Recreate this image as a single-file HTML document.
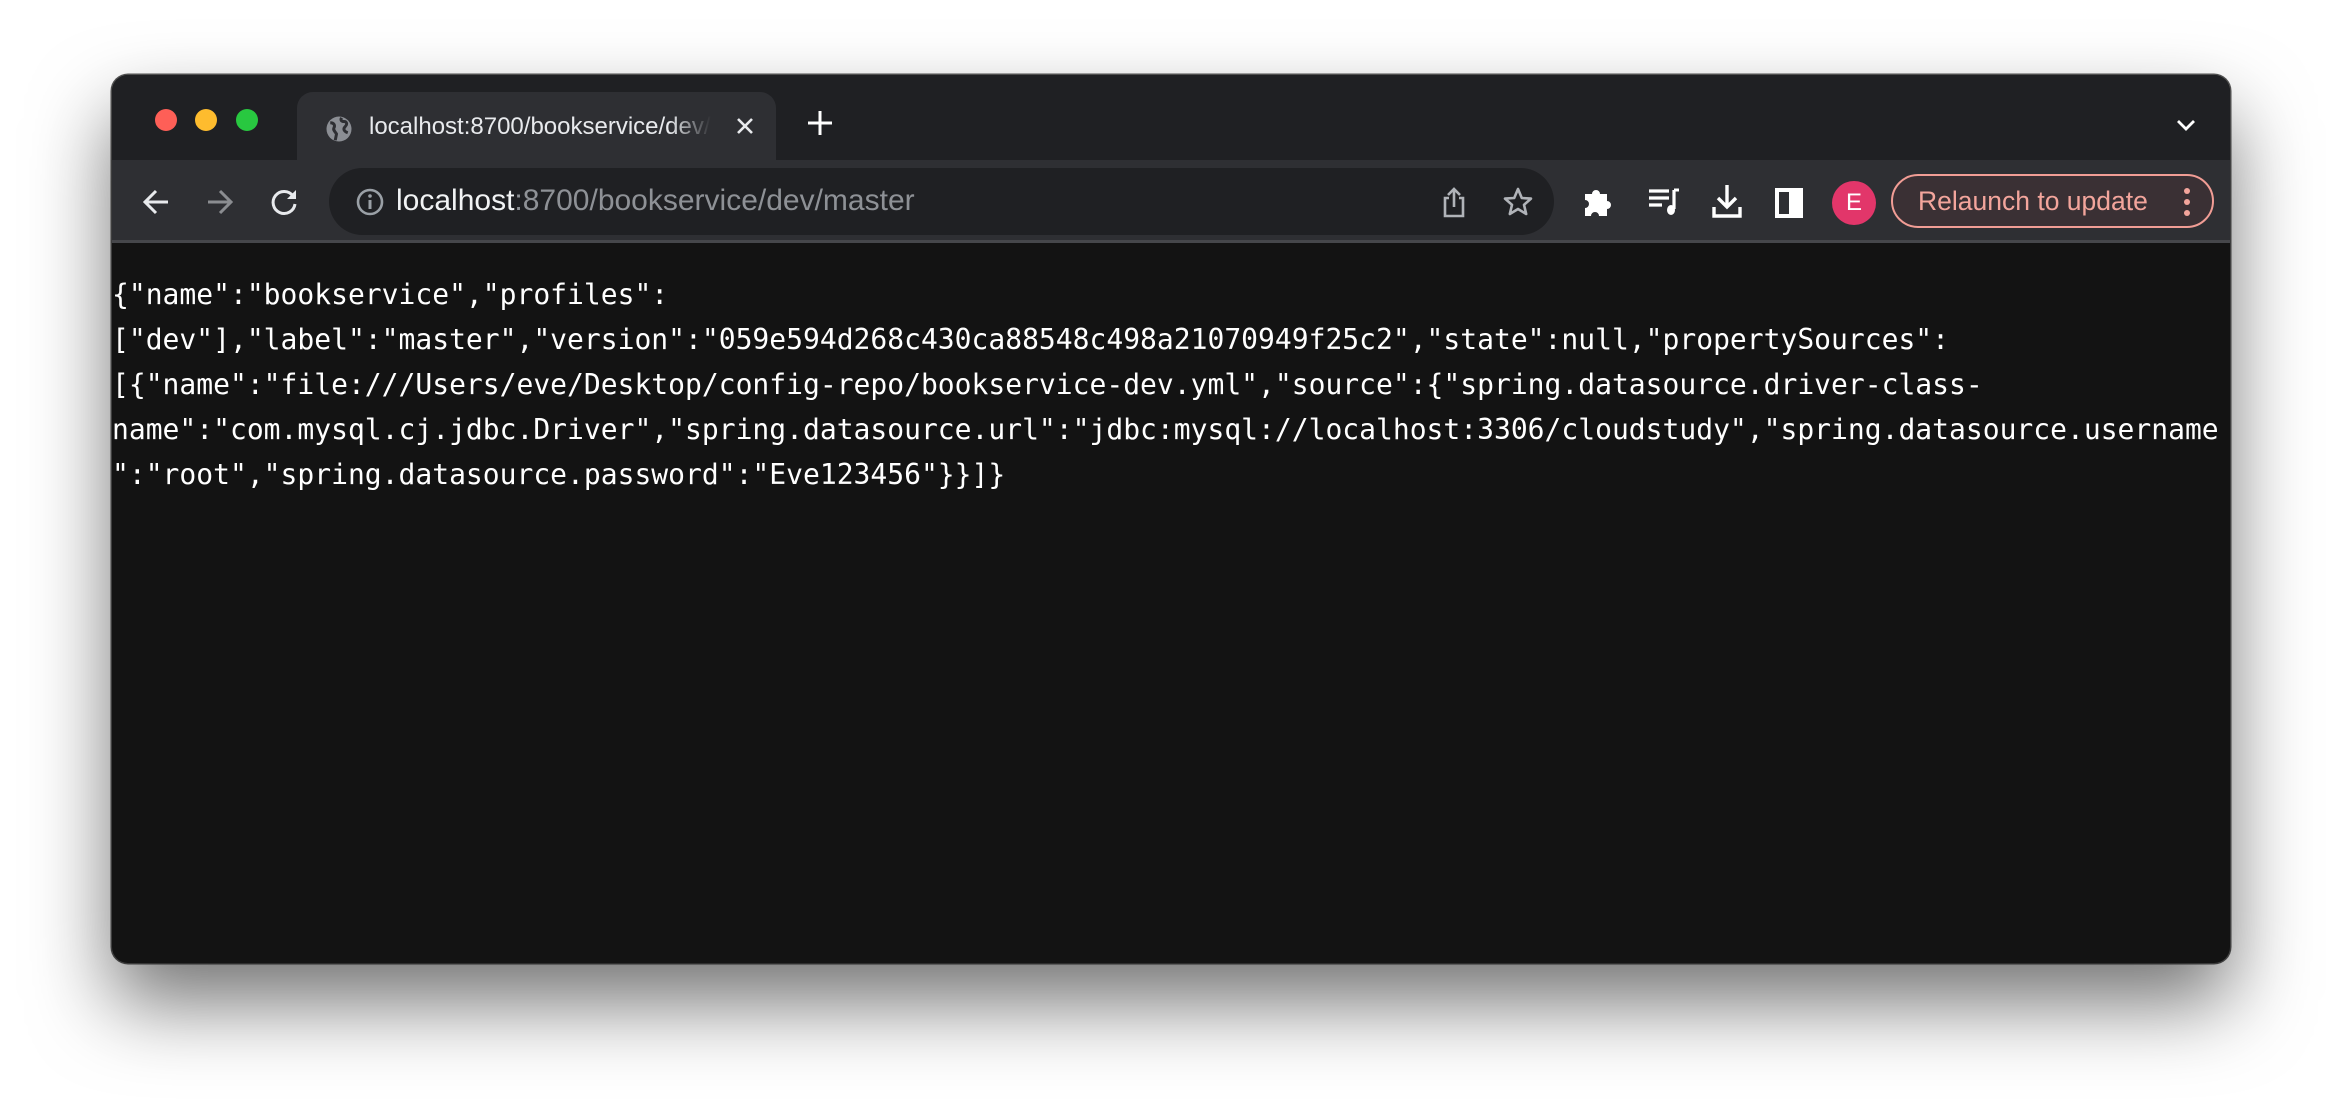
<!DOCTYPE html>
<html><head><meta charset="utf-8">
<style>
*{margin:0;padding:0;box-sizing:border-box}
html,body{width:2342px;height:1112px;background:#fff;overflow:hidden;font-family:"Liberation Sans",sans-serif}
.win{position:absolute;left:112px;top:75px;width:2118px;height:888px;border-radius:16px;background:#131313;overflow:hidden;box-shadow:0 40px 80px rgba(0,0,0,.55),0 0 0 1.5px #555;}
.strip{position:absolute;left:0;top:0;width:100%;height:85px;background:#1f2023}
.dot{position:absolute;top:34px;width:22px;height:22px;border-radius:50%}
.tab{position:absolute;left:185px;top:17px;width:479px;height:80px;background:#2e2f33;border-radius:16px 16px 0 0}
.tabtxt{position:absolute;left:72px;top:21px;font-size:24px;color:#e8eaed;white-space:nowrap;width:342px;overflow:hidden;-webkit-mask-image:linear-gradient(90deg,#000 88%,transparent)}
.tool{position:absolute;left:0;top:85px;width:100%;height:83px;background:#2e2f33;border-bottom:3px solid #46474b}
.omni{position:absolute;left:217px;top:8px;width:1225px;height:67px;background:#1f2023;border-radius:34px}
.url{position:absolute;left:67px;top:16px;font-size:30px;color:#8e9196;white-space:nowrap}
.url b{font-weight:normal;color:#f1f3f4}
.ic{position:absolute}
.relaunch{position:absolute;left:1779px;top:14px;width:323px;height:54px;border:2px solid #f19d95;border-radius:28px;background:#3a3034;color:#f3a59c;font-size:26.5px;line-height:50px;padding-left:25px}
.content{position:absolute;left:0;top:171px;width:2200px;font-family:"DejaVu Sans Mono",monospace;font-size:28.4px;line-height:45px;color:#fff;white-space:pre;padding-top:26px;transform:scaleX(0.986);transform-origin:0 0}
</style></head><body>
<div class="win">
 <div class="strip">
  <div class="dot" style="left:43px;background:#fe5f57"></div>
  <div class="dot" style="left:83px;background:#febc2e"></div>
  <div class="dot" style="left:124px;background:#28c840"></div>
  <div class="tab">
   <svg class="ic" style="left:27px;top:22px" width="30" height="30" viewBox="0 0 24 24"><circle cx="12" cy="12" r="10" fill="#8b8e94"/><path d="M5 7c3 0 4 2 3 4s1 3 2 5l-1 5M14 3c-1 2 0 3 2 3s3 2 1 4-1 4 2 5" stroke="#2e2f33" stroke-width="2.4" fill="none"/></svg>
   <div class="tabtxt">localhost:8700/bookservice/dev/master</div>
   <svg class="ic" style="left:439px;top:25px" width="18" height="18" viewBox="0 0 18 18"><path d="M2 2L16 16M16 2L2 16" stroke="#e8eaed" stroke-width="2.6"/></svg>
  </div>
  <svg class="ic" style="left:695px;top:35px" width="26" height="26" viewBox="0 0 26 26"><path d="M13 1V25M1 13H25" stroke="#fff" stroke-width="3"/></svg>
  <svg class="ic" style="left:2064px;top:44px" width="20" height="13" viewBox="0 0 20 13"><path d="M2 2L10 10L18 2" stroke="#fff" stroke-width="2.8" fill="none"/></svg>
 </div>
 <div class="tool">
  <svg class="ic" style="left:29px;top:27px" width="30" height="30" viewBox="0 0 30 30"><path d="M27 15H4M15 4L4 15L15 26" stroke="#e8eaed" stroke-width="3" fill="none"/></svg>
  <svg class="ic" style="left:93px;top:27px" width="30" height="30" viewBox="0 0 30 30"><path d="M3 15H26M15 4L26 15L15 26" stroke="#8b8d91" stroke-width="3" fill="none"/></svg>
  <svg class="ic" style="left:157px;top:27px" width="30" height="30" viewBox="0 0 30 30"><path d="M24 9A11 11 0 1 0 26 17" stroke="#e8eaed" stroke-width="3" fill="none"/><path d="M27 3V12H18Z" fill="#e8eaed"/></svg>
  <div class="omni">
   <svg class="ic" style="left:26px;top:19px" width="30" height="30" viewBox="0 0 30 30"><circle cx="15" cy="15" r="12" stroke="#9aa0a6" stroke-width="2.6" fill="none"/><path d="M15 13V22" stroke="#9aa0a6" stroke-width="3"/><circle cx="15" cy="9" r="1.8" fill="#9aa0a6"/></svg>
   <div class="url"><b>localhost</b>:8700/bookservice/dev/master</div>
   <svg class="ic" style="left:1112px;top:18px" width="26" height="32" viewBox="0 0 26 32"><path d="M8 12H4V30H22V12H18M13 21V3M7 9L13 3L19 9" stroke="#b0b3b8" stroke-width="2.6" fill="none"/></svg>
   <svg class="ic" style="left:1173px;top:18px" width="32" height="32" viewBox="0 0 32 32"><path d="M16 3L19.8 12L29 12.6L22 18.8L24.2 28L16 23L7.8 28L10 18.8L3 12.6L12.2 12Z" stroke="#b0b3b8" stroke-width="2.6" fill="none" stroke-linejoin="round"/></svg>
  </div>
  <svg class="ic" style="left:1470px;top:24px" width="32" height="34" viewBox="0 0 32 34"><path d="M3 10H10A4 4 0 1 1 18 10H25V17A4 4 0 1 1 25 25V32H17A4 4 0 1 0 9 32H3V24A4 4 0 1 0 3 16Z" fill="#fff"/></svg>
  <svg class="ic" style="left:1535px;top:27px" width="34" height="30" viewBox="0 0 34 30"><path d="M2 4H22M2 11H22M2 18H15M27 3V22" stroke="#fff" stroke-width="3.2"/><path d="M27 3H32" stroke="#fff" stroke-width="3"/><ellipse cx="24" cy="23" rx="4" ry="5" fill="#fff"/></svg>
  <svg class="ic" style="left:1599px;top:23px" width="32" height="36" viewBox="0 0 32 36"><path d="M16 2V24M7 15L16 24L25 15M3 24V33H29V24" stroke="#fff" stroke-width="3.4" fill="none"/></svg>
  <div class="ic" style="left:1663px;top:28px;width:28px;height:30px;border:4px solid #fff;border-right-width:14px"></div>
  <div class="ic" style="left:1720px;top:21px;width:44px;height:44px;border-radius:50%;background:#e2366a;color:#fff;font-size:24px;line-height:44px;text-align:center">E</div>
  <div class="relaunch">Relaunch to update
   <div class="ic" style="left:291px;top:12px;width:6px;height:6px;border-radius:50%;background:#f3a59c;box-shadow:0 11px 0 #f3a59c,0 22px 0 #f3a59c"></div>
  </div>
 </div>
 <div class="content">{"name":"bookservice","profiles":
["dev"],"label":"master","version":"059e594d268c430ca88548c498a21070949f25c2","state":null,"propertySources":
[{"name":"file:///Users/eve/Desktop/config-repo/bookservice-dev.yml","source":{"spring.datasource.driver-class-
name":"com.mysql.cj.jdbc.Driver","spring.datasource.url":"jdbc:mysql://localhost:3306/cloudstudy","spring.datasource.username
":"root","spring.datasource.password":"Eve123456"}}]}</div>
</div>
</body></html>
